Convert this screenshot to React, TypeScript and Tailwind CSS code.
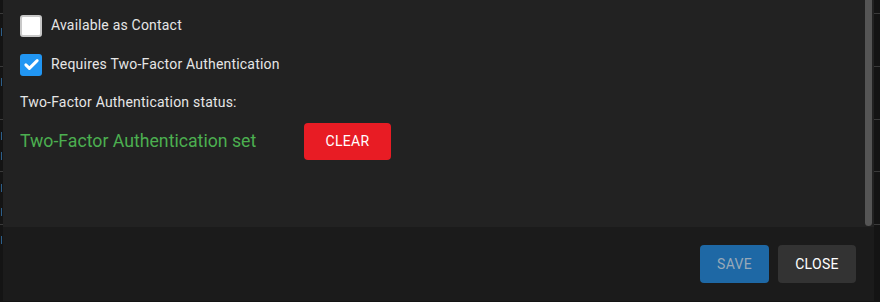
const rowLines = [13, 66, 119, 171, 224];

function SideStrip({ width, blue }: { width: string; blue?: boolean }) {
  return (
    <div className={`relative h-full shrink-0 bg-[#141414] ${width}`}>
      {rowLines.map((y) => (
        <div key={y} className="absolute left-0 right-0 h-px bg-[#3a3a3a]" style={{ top: y }} />
      ))}
      {blue &&
        [28, 78, 132, 152, 184, 208, 236].map((y) => (
          <div key={y} className="absolute left-[1px] h-[8px] w-px bg-[#2d5f8a]" style={{ top: y }} />
        ))}
    </div>
  );
}

function Checkbox({ checked, label }: { checked: boolean; label: string }) {
  return (
    <label className="flex h-[23px] items-center gap-[9px]">
      {checked ? (
        <span className="flex h-[22px] w-[22px] items-center justify-center rounded-[3px] bg-[#2196f3]">
          <svg width="17" height="17" viewBox="0 0 24 24" fill="none">
            <path d="M4 12.5l5 5L20 6.5" stroke="#fff" strokeWidth="4.2" strokeLinecap="round" strokeLinejoin="round" />
          </svg>
        </span>
      ) : (
        <span className="h-[22px] w-[22px] rounded-[3px] border-2 border-[#c8c8c8] bg-white" />
      )}
      <span className="text-[14px] tracking-[0.2px] text-[#e6e6e6]">{label}</span>
    </label>
  );
}

export default function App() {
  return (
    <div className="flex h-[302px] w-[880px] overflow-hidden bg-[#141414] font-['Roboto',sans-serif]">
      <SideStrip width="w-[3px]" blue />
      <div className="flex h-[301px] w-[871px] shrink-0 flex-col">
        <div className="relative flex h-[227px] flex-col bg-[#222222] pl-[17px]">
          <div className="pt-[14px]">
            <Checkbox checked={false} label="Available as Contact" />
          </div>
          <div className="pt-[16px]">
            <Checkbox checked label="Requires Two-Factor Authentication" />
          </div>
          <div className="pt-[16px] text-[14px] leading-[20px] tracking-[0.2px] text-[#e6e6e6]">
            Two-Factor Authentication status:
          </div>
          <div className="mt-[11px] flex items-center">
            <span className="w-[284px] text-[17.7px] text-[#4caf50]">Two-Factor Authentication set</span>
            <button className="h-[37px] w-[87px] rounded-[4px] bg-[#e81c24] text-[14px] tracking-[0.3px] text-white">
              CLEAR
            </button>
          </div>
          <div className="absolute right-[2px] top-0 h-[226px] w-[7px] rounded-b-[4px] bg-[#555555]" />
        </div>
        <div className="flex flex-1 items-start justify-end gap-[9px] bg-[#1b1b1b] pr-[18px] pt-[18px]">
          <button className="h-[38px] w-[69px] rounded-[4px] bg-[#1e68a5] text-[14px] tracking-[0.3px] text-[#98a9b8]">
            SAVE
          </button>
          <button className="h-[38px] w-[78px] rounded-[4px] bg-[#333333] text-[14px] tracking-[0.3px] text-white">
            CLOSE
          </button>
        </div>
      </div>
      <SideStrip width="w-[6px]" />
    </div>
  );
}
